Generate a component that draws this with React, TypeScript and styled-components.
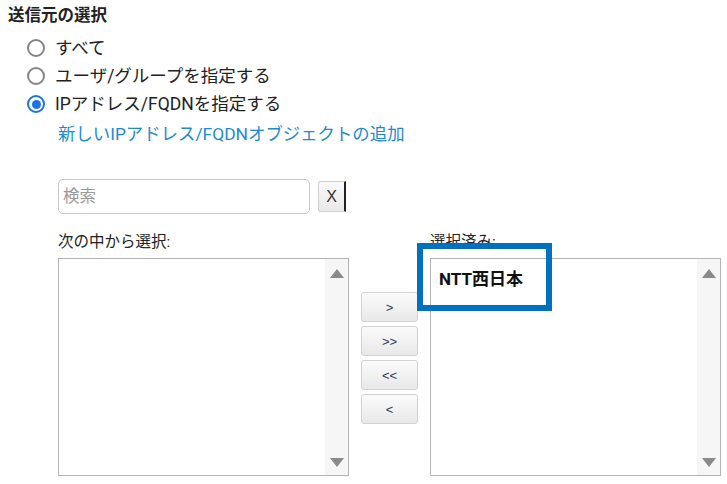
import React from "react";
import styled, { createGlobalStyle } from "styled-components";

const GlobalStyle = createGlobalStyle`
  body {
    margin: 0;
    background: #fff;
    font-family: Roboto, "Noto Sans CJK JP", "Noto Sans", sans-serif;
    color: #222;
  }
`;

const Page = styled.div`
  position: relative;
  width: 727px;
  height: 484px;
  padding: 6px 0 0 8px;
  box-sizing: border-box;
  overflow: hidden;
`;

const Heading = styled.div`
  font-size: 16.5px;
  font-weight: bold;
  line-height: 20px;
`;

const RadioList = styled.div`
  display: flex;
  flex-direction: column;
  gap: 8px;
  margin: 12px 0 0 19px;
`;

const RadioRow = styled.label`
  display: flex;
  align-items: center;
  gap: 10px;
  font-size: 17.5px;
  line-height: 20px;
`;

const RadioDot = styled.span<{ $checked?: boolean }>`
  width: 18px;
  height: 18px;
  box-sizing: border-box;
  border-radius: 50%;
  border: 2px solid ${p => (p.$checked ? "#1a73e8" : "#858585")};
  display: flex;
  align-items: center;
  justify-content: center;

  &::after {
    content: "";
    display: ${p => (p.$checked ? "block" : "none")};
    width: 9px;
    height: 9px;
    border-radius: 50%;
    background: #1a73e8;
  }
`;

const AddLink = styled.a`
  display: block;
  margin: 10px 0 0 50px;
  font-size: 17.4px;
  line-height: 20px;
  color: #1c8ad4;
  text-decoration: none;
`;

const Chooser = styled.div`
  margin: 35px 0 0 50px;
`;

const SearchRow = styled.div`
  display: flex;
  align-items: center;
`;

const SearchInput = styled.input`
  width: 252px;
  height: 35px;
  box-sizing: border-box;
  border: 1px solid #c8c8c8;
  border-radius: 5px;
  padding: 0 4px;
  font-size: 16.5px;
  font-family: inherit;
  outline: none;

  &::placeholder {
    color: #9a9a9a;
  }
`;

const ClearButton = styled.button`
  margin-left: 8px;
  width: 28px;
  height: 31px;
  box-sizing: border-box;
  border: 1px solid #cfcfcf;
  border-right: 2px solid #222;
  border-radius: 3px 0 0 3px;
  background: linear-gradient(#fafafa, #e9e9e9);
  font-size: 16px;
  font-family: "Liberation Sans", sans-serif;
  color: #333;
  padding: 0;
`;

const Columns = styled.div`
  display: flex;
  align-items: flex-start;
  margin-top: 18px;
`;

const ListColumn = styled.div`
  display: flex;
  flex-direction: column;
  gap: 6px;
`;

const ListLabel = styled.div`
  font-size: 15.5px;
  line-height: 20px;
  height: 20px;
`;

const ListBox = styled.div`
  width: 291px;
  height: 218px;
  box-sizing: border-box;
  border: 1px solid #b4b4b4;
  display: flex;
  background: #fff;
`;

const ListItems = styled.div`
  flex: 1;
  padding: 8px 0 0 8px;
`;

const Item = styled.div`
  font-size: 17px;
  font-weight: bold;
  line-height: 24px;
  color: #111;
`;

const Scrollbar = styled.div`
  width: 23px;
  background: #f6f6f6;
  display: flex;
  flex-direction: column;
  justify-content: space-between;
  align-items: center;
  padding: 10px 0 8px;
`;

const Arrow = styled.span<{ $down?: boolean }>`
  width: 0;
  height: 0;
  border-left: 7px solid transparent;
  border-right: 7px solid transparent;
  ${p =>
    p.$down
      ? "border-top: 9px solid #8a8a8a;"
      : "border-bottom: 9px solid #8a8a8a;"}
`;

const MoveButtons = styled.div`
  display: flex;
  flex-direction: column;
  gap: 4px;
  width: 57px;
  margin: 60px 12px 0 12px;
`;

const MoveButton = styled.button`
  height: 30px;
  box-sizing: border-box;
  border: 1px solid #d2d2d2;
  border-radius: 3px;
  background: linear-gradient(#fbfbfb, #e8e8e8);
  font-size: 13px;
  font-family: "Liberation Sans", sans-serif;
  color: #2a3a55;
  padding: 0;
`;

const Highlight = styled.div`
  position: absolute;
  left: 417px;
  top: 243px;
  width: 135px;
  height: 68px;
  box-sizing: border-box;
  border: 6px solid #0071c1;
  pointer-events: none;
`;

function ScrollTrack() {
  return (
    <Scrollbar>
      <Arrow />
      <Arrow $down />
    </Scrollbar>
  );
}

export default function App() {
  return (
    <>
      <GlobalStyle />
      <Page>
        <Heading>送信元の選択</Heading>
        <RadioList>
          <RadioRow>
            <RadioDot />
            すべて
          </RadioRow>
          <RadioRow>
            <RadioDot />
            ユーザ/グループを指定する
          </RadioRow>
          <RadioRow>
            <RadioDot $checked />
            IPアドレス/FQDNを指定する
          </RadioRow>
        </RadioList>
        <AddLink href="#">新しいIPアドレス/FQDNオブジェクトの追加</AddLink>
        <Chooser>
          <SearchRow>
            <SearchInput placeholder="検索" />
            <ClearButton>X</ClearButton>
          </SearchRow>
          <Columns>
            <ListColumn>
              <ListLabel>次の中から選択:</ListLabel>
              <ListBox>
                <ListItems />
                <ScrollTrack />
              </ListBox>
            </ListColumn>
            <MoveButtons>
              <MoveButton>&gt;</MoveButton>
              <MoveButton>&gt;&gt;</MoveButton>
              <MoveButton>&lt;&lt;</MoveButton>
              <MoveButton>&lt;</MoveButton>
            </MoveButtons>
            <ListColumn>
              <ListLabel>選択済み:</ListLabel>
              <ListBox>
                <ListItems>
                  <Item>NTT西日本</Item>
                </ListItems>
                <ScrollTrack />
              </ListBox>
            </ListColumn>
          </Columns>
        </Chooser>
        <Highlight />
      </Page>
    </>
  );
}
